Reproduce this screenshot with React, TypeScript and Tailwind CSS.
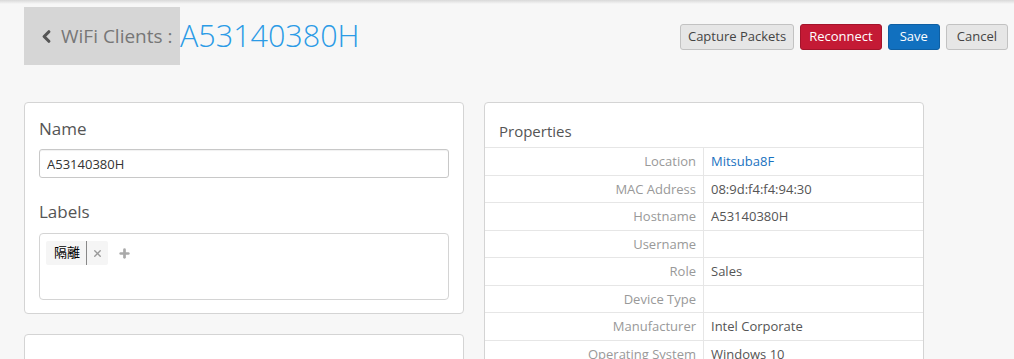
import { ChevronLeft, X, Plus } from 'lucide-react'

const props = [
  { label: 'Location', value: 'Mitsuba8F', link: true },
  { label: 'MAC Address', value: '08:9d:f4:f4:94:30' },
  { label: 'Hostname', value: 'A53140380H' },
  { label: 'Username', value: '' },
  { label: 'Role', value: 'Sales' },
  { label: 'Device Type', value: '' },
  { label: 'Manufacturer', value: 'Intel Corporate' },
  { label: 'Operating System', value: 'Windows 10' },
]

export default function App() {
  return (
    <div className="h-[359px] overflow-hidden bg-[#f7f7f7] font-['Open_Sans','Noto_Sans_CJK_JP',sans-serif]">
      {/* top shadow */}
      <div className="h-[4px] bg-gradient-to-b from-[#d9d9d9] to-[#f7f7f7]" />

      {/* header */}
      <div className="flex items-start justify-between pl-[24px] pr-[6px] pt-[3px]">
        <div className="flex items-center">
          <button className="flex h-[58px] w-[156px] items-center bg-[#d6d6d6] pl-[13px] text-[#777]">
            <ChevronLeft className="h-[19px] w-[19px] text-[#555]" strokeWidth={4} />
            <span className="ml-[5px] text-[19px] leading-none whitespace-nowrap">WiFi Clients :</span>
          </button>
          <h1 className="mt-[-2px] text-[30.5px] font-light leading-none text-[#2b9be6]">A53140380H</h1>
        </div>
        <div className="mt-[17px] flex gap-[6px] text-[13px]">
          <button className="h-[26px] rounded-[3px] border border-[#c2c2c2] bg-[#e6e6e6] px-[7px] text-[#444]">Capture Packets</button>
          <button className="h-[26px] rounded-[3px] border border-[#a3142b] bg-[#c41a35] px-[8px] text-white">Reconnect</button>
          <button className="h-[26px] rounded-[3px] border border-[#0e5fa3] bg-[#1170bf] px-[11px] text-white">Save</button>
          <button className="h-[26px] rounded-[3px] border border-[#c2c2c2] bg-[#e6e6e6] px-[10px] text-[#444]">Cancel</button>
        </div>
      </div>

      {/* body */}
      <div className="mt-[37px] flex gap-[20px] pl-[24px]">
        <div className="flex w-[440px] flex-col gap-[20px]">
          <div className="rounded-[4px] border border-[#d4d4d4] bg-white px-[14px] pt-[14px] pb-[13px]">
            <div className="text-[17px] leading-[24px] text-[#555]">Name</div>
            <input
              defaultValue="A53140380H"
              className="mt-[8px] h-[29px] w-full rounded-[3px] border border-[#c8c8c8] px-[7px] text-[13px] text-[#333] shadow-[inset_0_1px_1px_rgba(0,0,0,0.06)] outline-none"
            />
            <div className="mt-[22px] text-[17px] leading-[24px] text-[#555]">Labels</div>
            <div className="mt-[9px] h-[67px] rounded-[4px] border border-[#d4d4d4] px-[6px] pt-[7px]">
              <div className="flex items-center">
                <div className="flex h-[24px] items-stretch rounded-[2px] bg-[#f5f5f5]">
                  <span className="flex items-center pl-[8px] pr-[6px] text-[13px] text-black">隔離</span>
                  <span className="w-px bg-[#888]" />
                  <span className="flex w-[21px] items-center justify-center text-[#999]">
                    <X className="h-[11px] w-[11px]" strokeWidth={3} />
                  </span>
                </div>
                <Plus className="ml-[10px] h-[13px] w-[13px] text-[#aaa]" strokeWidth={5} />
              </div>
            </div>
          </div>
          <div className="h-[60px] rounded-[4px] border border-[#d4d4d4] bg-white" />
        </div>

        <div className="w-[440px] rounded-[4px] border border-[#d4d4d4] bg-white">
          <div className="h-[44px] px-[14px] pt-[17px] text-[15px] leading-[22px] text-[#555]">Properties</div>
          {props.map((p) => (
            <div key={p.label} className="flex h-[27.5px] border-t border-[#e6e6e6] text-[13px] leading-[26px]">
              <div className="w-[219px] border-r border-[#e6e6e6] pr-[7px] text-right text-[#999]">{p.label}</div>
              <div className={`pl-[7px] ${p.link ? 'text-[#1a72c0]' : 'text-[#555]'}`}>{p.value}</div>
            </div>
          ))}
        </div>
      </div>
    </div>
  )
}
